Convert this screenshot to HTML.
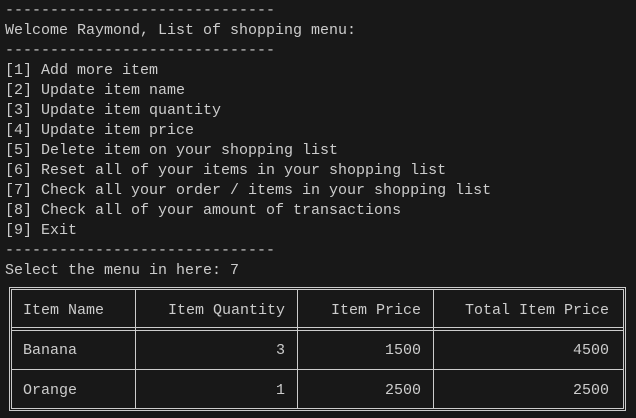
<!DOCTYPE html>
<html><head><meta charset="utf-8"><style>
html,body{margin:0;padding:0;background:#181818;width:636px;height:418px;overflow:hidden}
body{font-family:"Liberation Mono","DejaVu Sans Mono",monospace;font-size:15px;color:#cccccc;position:relative}
pre{margin:0;position:absolute;left:5px;top:1px;font:inherit;line-height:20px;white-space:pre}
.b{position:absolute;border-color:#cccccc}
.t{position:absolute;line-height:20px;white-space:pre}
.r{text-align:right}
</style></head><body>
<pre>------------------------------
Welcome Raymond, List of shopping menu:
------------------------------
[1] Add more item
[2] Update item name
[3] Update item quantity
[4] Update item price
[5] Delete item on your shopping list
[6] Reset all of your items in your shopping list
[7] Check all your order / items in your shopping list
[8] Check all of your amount of transactions
[9] Exit
------------------------------
Select the menu in here: 7</pre>
<div class="b" style="left:9px;top:287px;width:611px;height:118px;border:3px double #ccc"></div>
<div class="b" style="left:12px;top:327px;width:611px;border-top:4px double #ccc"></div>
<div class="b" style="left:12px;top:369px;width:611px;border-top:1px solid #ccc"></div>
<div class="b" style="left:135px;top:290px;height:118px;border-left:1px solid #ccc"></div>
<div class="b" style="left:297px;top:290px;height:118px;border-left:1px solid #ccc"></div>
<div class="b" style="left:433px;top:290px;height:118px;border-left:1px solid #ccc"></div>
<div class="t" style="left:23px;top:301px">Item Name</div>
<div class="t r" style="left:140px;width:145px;top:301px">Item Quantity</div>
<div class="t r" style="left:300px;width:121px;top:301px">Item Price</div>
<div class="t r" style="left:436px;width:173px;top:301px">Total Item Price</div>
<div class="t" style="left:23px;top:341px">Banana</div>
<div class="t r" style="left:140px;width:145px;top:341px">3</div>
<div class="t r" style="left:300px;width:121px;top:341px">1500</div>
<div class="t r" style="left:436px;width:173px;top:341px">4500</div>
<div class="t" style="left:23px;top:381px">Orange</div>
<div class="t r" style="left:140px;width:145px;top:381px">1</div>
<div class="t r" style="left:300px;width:121px;top:381px">2500</div>
<div class="t r" style="left:436px;width:173px;top:381px">2500</div>
</body></html>
